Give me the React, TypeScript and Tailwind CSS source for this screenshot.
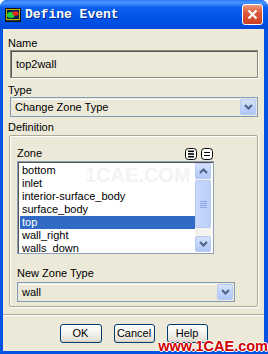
import React from 'react';

const zones = ['bottom', 'inlet', 'interior-surface_body', 'surface_body', 'top', 'wall_right', 'walls_down'];

const Chevron = ({ up = false }: { up?: boolean }) => (
  <svg width="9" height="6" viewBox="0 0 9 6">
    <polyline
      points={up ? '1,5 4.5,1.5 8,5' : '1,1 4.5,4.5 8,1'}
      fill="none"
      stroke="#4d6185"
      strokeWidth="2"
    />
  </svg>
);

// XP style blue dropdown / scroll button
const XpButton = ({ up = false, className = '' }: { up?: boolean; className?: string }) => (
  <div
    className={`flex items-center justify-center rounded-[2px] border border-[#b7c9f5] bg-[linear-gradient(180deg,#d6e2fd_0%,#c1d3fb_50%,#b2c7f6_100%)] ${className}`}
  >
    <Chevron up={up} />
  </div>
);

const Combo = ({ value, className = '' }: { value: string; className?: string }) => (
  <div className={`flex h-[20px] items-stretch border border-[#7f9db9] bg-[#ece9d8] p-[1px] ${className}`}>
    <div className="flex flex-1 items-center pl-[3px] shadow-[inset_0_1px_0_#fff]">{value}</div>
    <XpButton className="w-[16px]" />
  </div>
);

const DlgButton = ({ label, w }: { label: string; w: string }) => (
  <div
    className={`flex h-[19px] ${w} items-center justify-center rounded-[3px] border border-[#003c74] bg-[linear-gradient(180deg,#ffffff_0%,#f4f3ee_45%,#e6e3d8_85%,#d6d0c5_100%)]`}
  >
    {label}
  </div>
);

export default function App() {
  return (
    <div className="relative h-[354px] w-[268px] overflow-hidden bg-white font-['Liberation_Sans',Arial,sans-serif] text-[11px] leading-[13px] text-black">
      <div className="flex h-full flex-col rounded-t-[7px] bg-[#0553e2]">
        {/* title bar */}
        <div className="flex h-[29px] items-center rounded-t-[7px] bg-[linear-gradient(180deg,#2b7af5_0%,#4a97ff_10%,#0d60ee_25%,#0055e8_60%,#0049db_100%)] pl-[5px] pr-[5px]">
          <svg width="16" height="14" viewBox="0 0 16 14">
            <rect x="0" y="0" width="16" height="14" fill="#111" />
            <rect x="1" y="1" width="14" height="11" fill="#b8b400" />
            <rect x="2" y="2" width="12" height="9" fill="#0b1f55" />
            <ellipse cx="6" cy="7" rx="4" ry="3" fill="#1fd23a" />
            <ellipse cx="10.5" cy="5.5" rx="3" ry="2.2" fill="#e8241c" />
            <rect x="2" y="12" width="12" height="1" fill="#3a3a3a" />
          </svg>
          <span className="ml-[4px] font-['Liberation_Mono',monospace] text-[13px] font-bold text-white [text-shadow:1px_1px_0_#0a2a8a]">
            Define Event
          </span>
          <div className="ml-auto flex h-[21px] w-[21px] items-center justify-center rounded-[3px] border border-white bg-[linear-gradient(180deg,#ec9b80_0%,#dd5a3a_40%,#c8401f_100%)]">
            <svg width="11" height="11" viewBox="0 0 11 11">
              <path d="M1.5 1.5 L9.5 9.5 M9.5 1.5 L1.5 9.5" stroke="#fff" strokeWidth="2.2" />
            </svg>
          </div>
        </div>

        {/* body */}
        <div className="mb-[3px] ml-[3px] mr-[4px] flex flex-1 flex-col bg-[#ece9d8]">
          <div className="ml-[5px] mt-[8px]">Name</div>
          <div className="ml-[7px] flex h-[28px] w-[248px] items-center border border-[#8a887a] pl-[5px] shadow-[inset_1px_1px_0_#555,1px_1px_0_#fff]">
            top2wall
          </div>

          <div className="ml-[5px] mt-[6px]">Type</div>
          <Combo value="Change Zone Type" className="ml-[7px] w-[248px]" />

          <div className="ml-[5px] mt-[4px]">Definition</div>
          <div className="ml-[6px] mt-[1px] flex h-[172px] w-[249px] flex-col rounded-[2px] border border-[#aca899] pl-[7px] shadow-[inset_1px_1px_0_#fff,1px_1px_0_#fff]">
            <div className="mt-[10px] flex h-[15px] w-[197px] items-center">
              <span>Zone</span>
              <svg className="ml-auto" width="12" height="12" viewBox="0 0 12 12">
                <rect x="0.5" y="0.5" width="11" height="11" rx="3" fill="#fff" stroke="#000" />
                <rect x="3" y="2.5" width="6" height="1.6" fill="#000" />
                <rect x="3" y="5.2" width="6" height="1.6" fill="#000" />
                <rect x="3" y="7.9" width="6" height="1.6" fill="#000" />
              </svg>
              <svg className="ml-[4px] mr-[1px]" width="12" height="12" viewBox="0 0 12 12">
                <rect x="0.5" y="0.5" width="11" height="11" rx="3" fill="#fff" stroke="#000" />
                <rect x="3" y="4" width="6" height="1" fill="#000" />
                <rect x="3" y="7" width="6" height="1" fill="#000" />
              </svg>
            </div>

            {/* zone list */}
            <div className="relative flex h-[93px] w-[197px] border border-[#8c9fba] bg-white shadow-[inset_1px_1px_0_#555]">
              <div className="pointer-events-none absolute left-[67px] top-[2px] text-[20px] font-bold leading-[22px] text-[#f3f3f3]">
                1CAE.COM
              </div>
              <div className="relative flex flex-1 flex-col overflow-hidden pl-[2px] pt-[2px]">
                {zones.map((z) => (
                  <div
                    key={z}
                    className={`h-[13px] shrink-0 pl-[2px] leading-[13px] ${z === 'top' ? 'bg-[#316ac5] text-white' : ''}`}
                  >
                    {z}
                  </div>
                ))}
              </div>
              <div className="relative my-[1px] mr-[2px] flex w-[16px] flex-col bg-[#f4f3ee]">
                <XpButton up className="h-[16px]" />
                <div className="mt-[1px] flex h-[48px] flex-col items-center justify-center gap-[1px] rounded-[2px] border border-[#b7c9f5] bg-[linear-gradient(90deg,#c9d8fc_0%,#bccffa_100%)]">
                  <div className="h-[1px] w-[7px] bg-[#8ca5e5]" />
                  <div className="h-[1px] w-[7px] bg-[#8ca5e5]" />
                  <div className="h-[1px] w-[7px] bg-[#8ca5e5]" />
                  <div className="h-[1px] w-[7px] bg-[#8ca5e5]" />
                </div>
                <div className="flex-1" />
                <XpButton className="h-[16px]" />
              </div>
            </div>

            <div className="mt-[13px]">New Zone Type</div>
            <Combo value="wall" className="mt-[2px] w-[218px]" />
          </div>

          <div className="mt-[7px] h-[2px] border-t border-[#aca899] bg-white" />

          <div className="mt-[8px] flex justify-center gap-[12px]">
            <DlgButton label="OK" w="w-[42px]" />
            <DlgButton label="Cancel" w="w-[41px]" />
            <DlgButton label="Help" w="w-[41px]" />
          </div>
        </div>
      </div>

      <div className="absolute bottom-[0px] right-[0px] font-['Liberation_Sans',Arial,sans-serif] text-[14.5px] font-bold leading-[15px] text-[#d10000] [text-shadow:1px_0_0_#fff,-1px_0_0_#fff,0_1px_0_#fff,0_-1px_0_#fff]">
        www.1CAE.com
      </div>
    </div>
  );
}
